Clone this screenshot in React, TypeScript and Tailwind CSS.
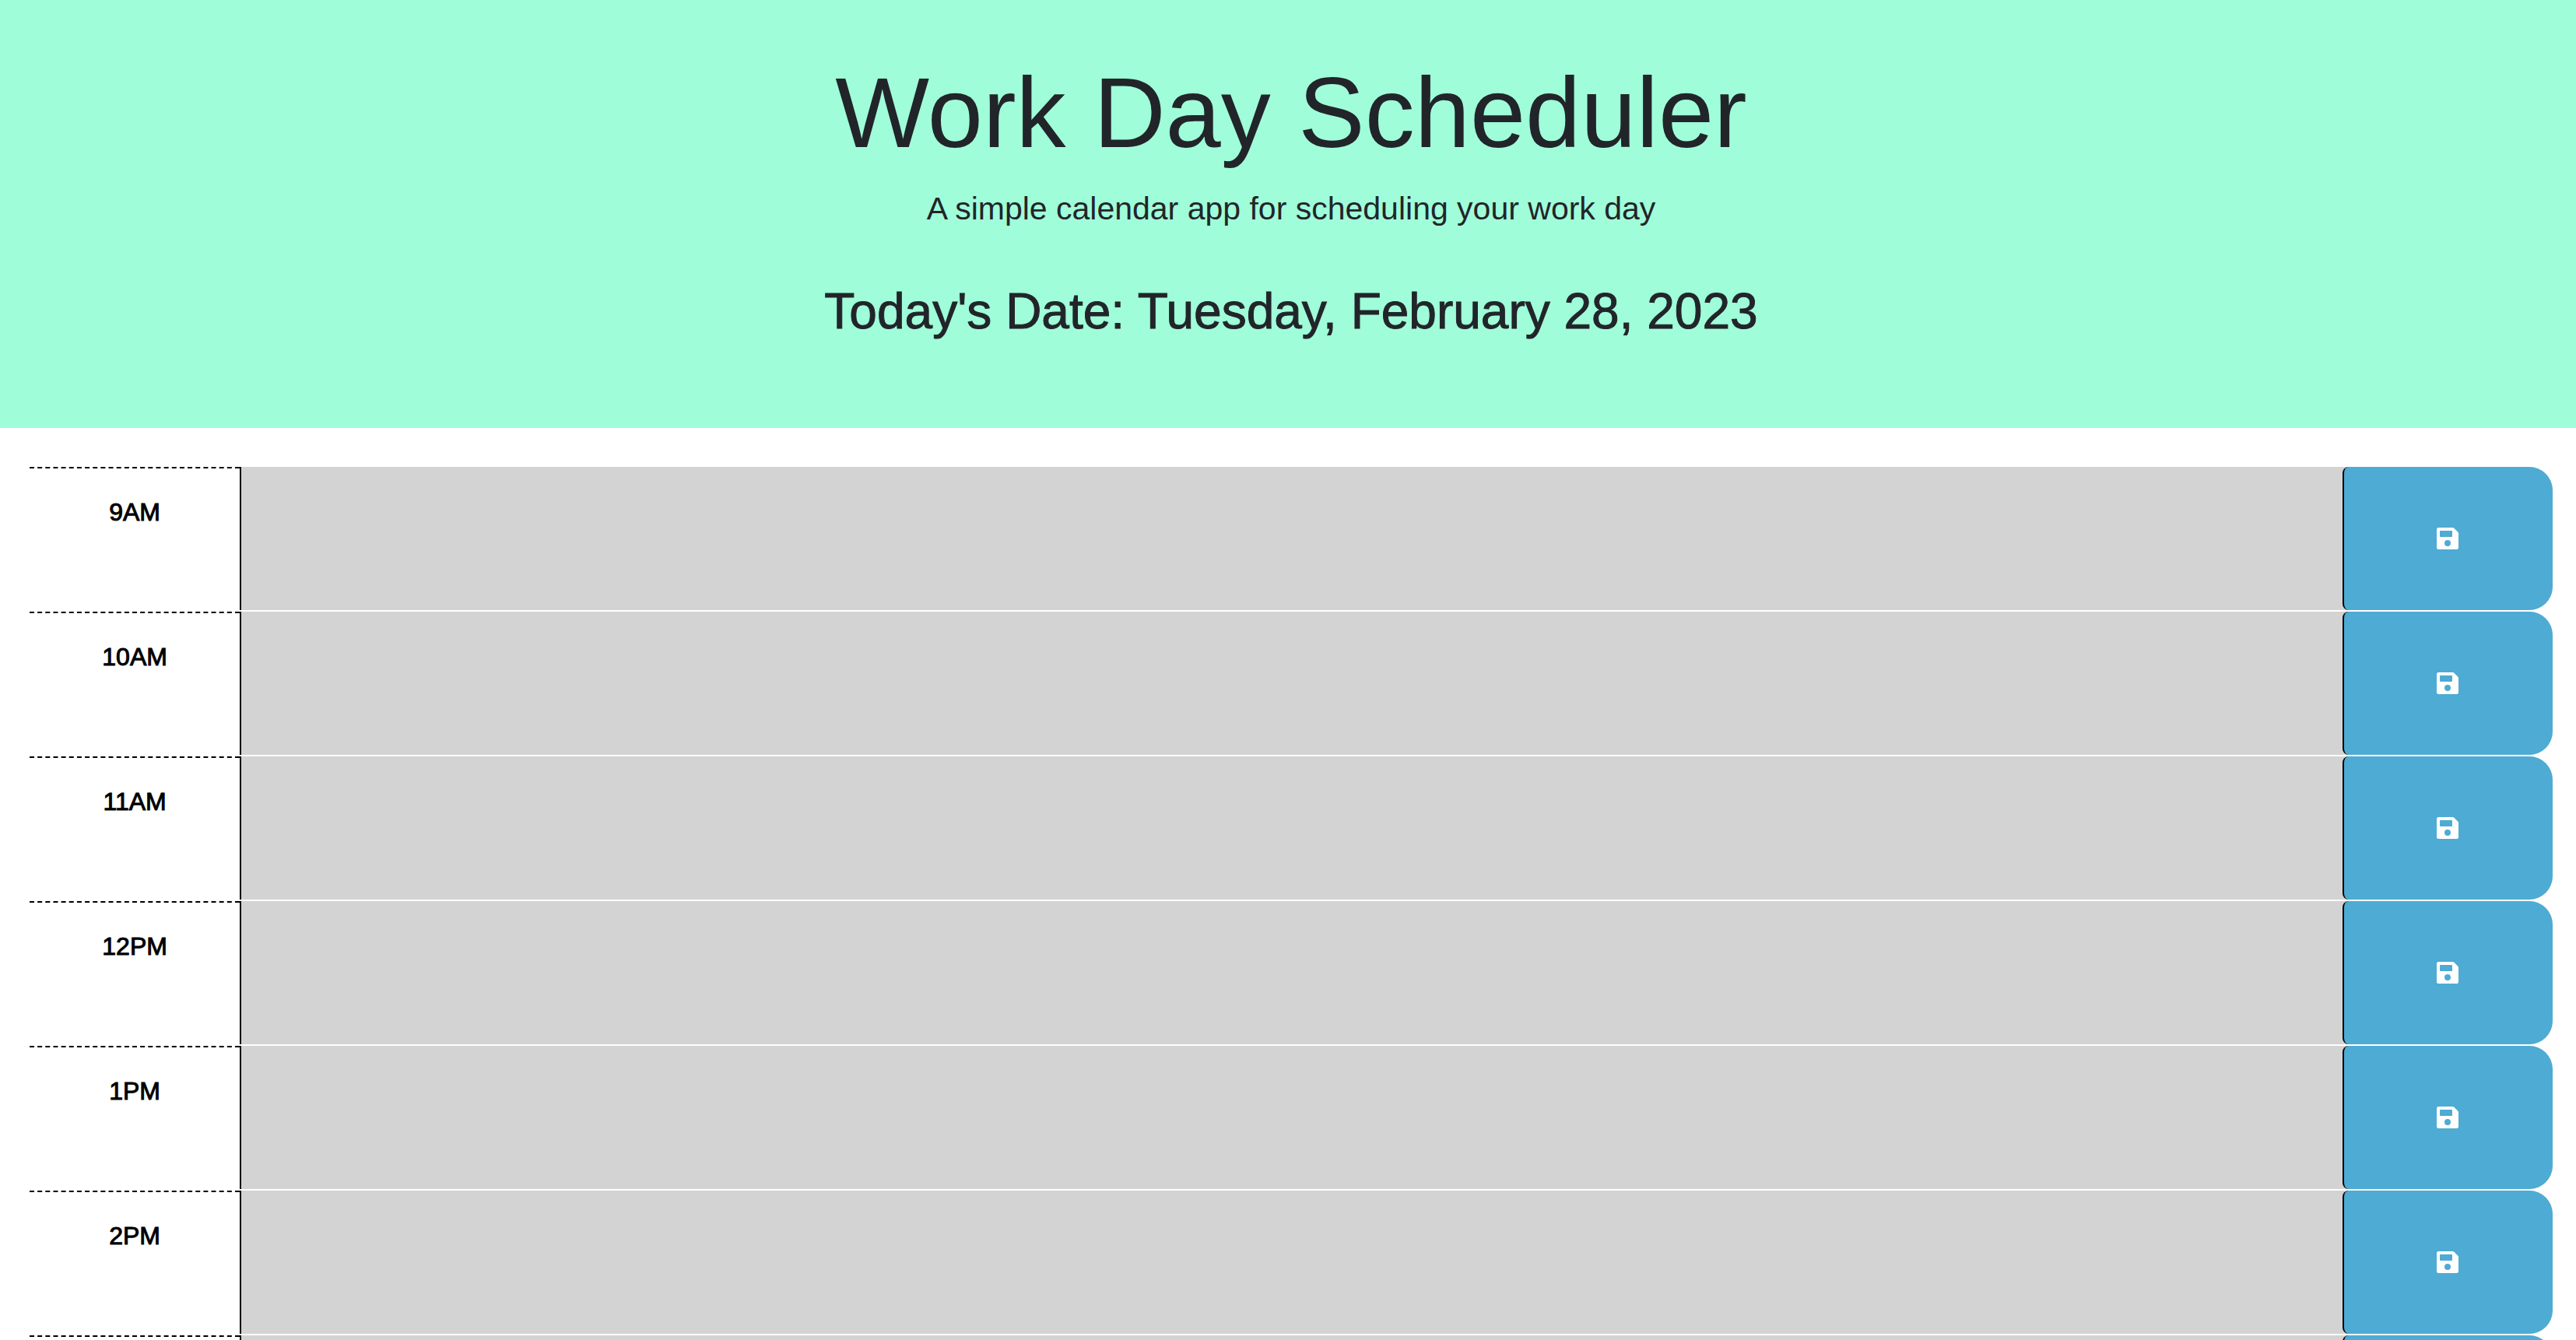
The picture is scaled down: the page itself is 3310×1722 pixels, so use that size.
const hours = ["9AM", "10AM", "11AM", "12PM", "1PM", "2PM", "3PM"];

function SaveIcon() {
  return (
    <svg viewBox="0 0 28 28" className="size-7" fill="currentColor" aria-hidden="true">
      <path
        fillRule="evenodd"
        d="M2.5 0H20.5a2.5 2.5 0 0 1 1.8.7L27.3 5.7a2.5 2.5 0 0 1 .7 1.8V25.5a2.5 2.5 0 0 1-2.5 2.5H2.5a2.5 2.5 0 0 1-2.5-2.5V2.5a2.5 2.5 0 0 1 2.5-2.5ZM4.8 4a.8.8 0 0 0-.8.8v6.4a.8.8 0 0 0 .8.8h14.4a.8.8 0 0 0 .8-.8V4.8a.8.8 0 0 0-.8-.8ZM14 16a4 4 0 1 0 0 8a4 4 0 0 0 0-8Z"
      />
    </svg>
  );
}

function TimeBlock({ hour }: { hour: string }) {
  return (
    <div className="flex h-[186px]">
      <div className="w-1/12 border-t-2 border-dashed border-black pt-8 text-center">
        <label
          htmlFor={`task-${hour}`}
          className="block text-[32px] leading-[48px] text-black [-webkit-text-stroke:1px]"
        >
          {hour}
        </label>
      </div>
      <textarea
        id={`task-${hour}`}
        className="block h-[184px] w-10/12 resize-none border-l-2 border-black bg-[#d3d3d3] p-1 text-[32px] outline-none"
      />
      <div className="h-[184px] w-1/12 rounded-r-[32px] bg-[#d3d3d3]">
        <button
          type="button"
          aria-label={`Save ${hour}`}
          className="flex size-full items-center justify-center rounded-l-lg rounded-r-[30px] border-l-2 border-black bg-[#4eabd3] pr-0.5 text-white"
        >
          <SaveIcon />
        </button>
      </div>
    </div>
  );
}

export default function App() {
  return (
    <div className="min-h-screen bg-white font-['Helvetica_Neue','Liberation_Sans',sans-serif] text-[#212529]">
      <header className="mb-[50px] bg-[#a0fdd9] pt-[68px] pb-[110px] pl-2 text-center">
        <h1 className="text-[128px] leading-[154px]">Work Day Scheduler</h1>
        <p className="mt-4 text-[41px] leading-[60px]">A simple calendar app for scheduling your work day</p>
        <p className="mt-[62px] text-[64px] leading-[80px] [-webkit-text-stroke:1px]">
          Today's Date: Tuesday, February 28, 2023
        </p>
      </header>
      <main className="pr-[30px] pl-[38px]">
        {hours.map((hour) => (
          <TimeBlock key={hour} hour={hour} />
        ))}
      </main>
    </div>
  );
}
